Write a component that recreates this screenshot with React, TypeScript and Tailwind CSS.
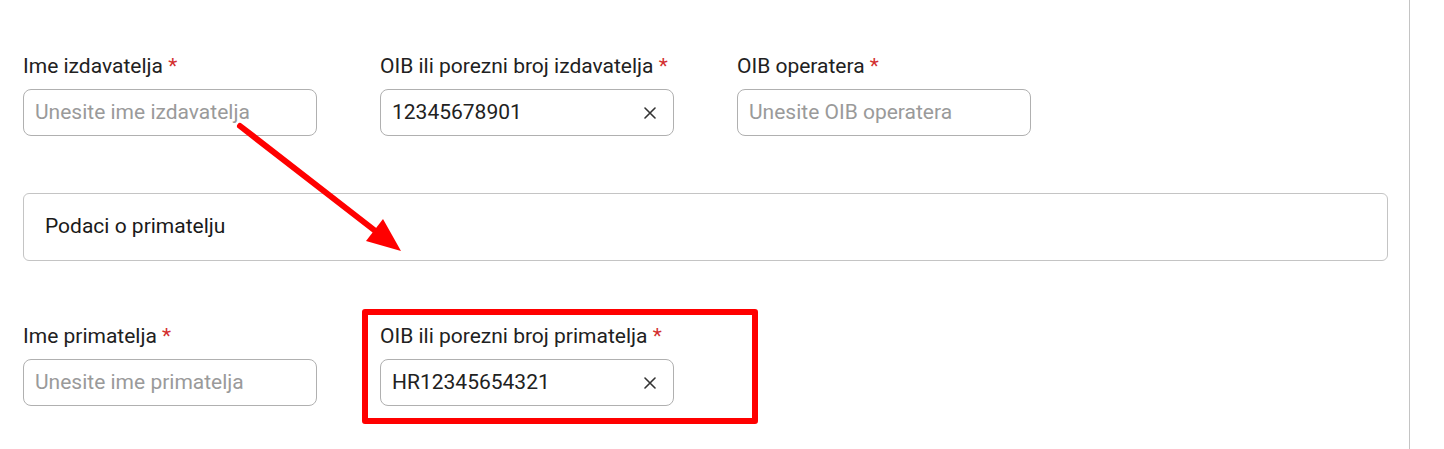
import React from "react";

function Label({ text }: { text: string }) {
  return (
    <div className="mb-[11px] h-[24px] whitespace-nowrap text-[21px] leading-[24px] text-[#212121]">
      {text} <span className="text-[#d32f2f]">*</span>
    </div>
  );
}

function Field({ label, placeholder, value }: { label: string; placeholder?: string; value?: string }) {
  return (
    <div className="w-[294px]">
      <Label text={label} />
      <div className="flex h-[47px] items-center rounded-[8px] border border-[#b0b0b0] bg-white pl-[11px] pr-[17px]">
        {value ? (
          <>
            <span className="flex-1 text-[21px] text-[#212121]">{value}</span>
            <svg width="12" height="12" viewBox="0 0 12 12" className="text-[#333]">
              <path d="M1 1 L11 11 M11 1 L1 11" stroke="currentColor" strokeWidth="1.6" strokeLinecap="round" />
            </svg>
          </>
        ) : (
          <span className="whitespace-nowrap text-[21px] text-[#9a9a9a]">{placeholder}</span>
        )}
      </div>
    </div>
  );
}

export default function App() {
  return (
    <div className="relative h-[449px] w-[1444px] overflow-hidden bg-white" style={{ fontFamily: "Roboto, 'Noto Sans', sans-serif" }}>
      <div className="h-[449px] w-[1410px] border-r border-[#c4c4c4] pl-[23px] pr-[21px] pt-[54px]">
        <div className="flex gap-[63px]">
          <Field label="Ime izdavatelja" placeholder="Unesite ime izdavatelja" />
          <Field label="OIB ili porezni broj izdavatelja" value="12345678901" />
          <Field label="OIB operatera" placeholder="Unesite OIB operatera" />
        </div>
        <div className="mt-[57px] flex h-[68px] items-center rounded-[6px] border border-[#c4c4c4] pl-[21px]">
          <span className="text-[21px] text-[#1a1a1a]">Podaci o primatelju</span>
        </div>
        <div className="mt-[63px] flex gap-[63px]">
          <Field label="Ime primatelja" placeholder="Unesite ime primatelja" />
          <Field label="OIB ili porezni broj primatelja" value="HR12345654321" />
        </div>
      </div>
      <div className="absolute left-[362px] top-[309px] h-[115px] w-[396px] rounded-[3px] border-[6px] border-[#ff0000]" />
      <svg className="absolute left-0 top-0" width="1444" height="449">
        <line x1="240" y1="126" x2="378" y2="233" stroke="#ff0000" strokeWidth="6" strokeLinecap="round" />
        <polygon points="401,251 366,241 383,219" fill="#ff0000" />
      </svg>
    </div>
  );
}
